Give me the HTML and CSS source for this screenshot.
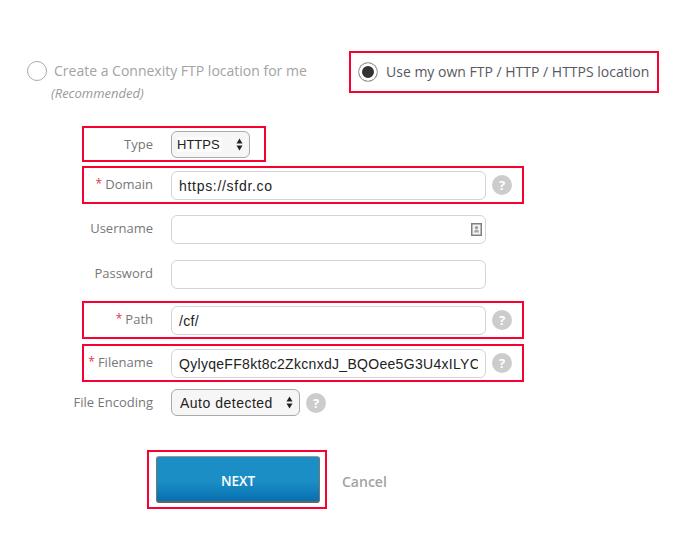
FILE: index.html
```html
<!DOCTYPE html>
<html lang="en">
<head>
    <meta charset="UTF-8">
    <meta name="viewport" content="width=device-width, initial-scale=1.0">
    <title>FTP Location</title>
    <link rel="stylesheet" href="styles.css">
</head>
<body>
    <div class="location-choice">
        <div class="choice choice-off">
            <span class="radio"></span>
            <div>
                <div class="choice-label">Create a Connexity FTP location for me</div>
                <div class="choice-note">(Recommended)</div>
            </div>
        </div>
        <div class="choice choice-on marked">
            <span class="radio radio-on"></span>
            <div class="choice-label">Use my own FTP / HTTP / HTTPS location</div>
        </div>
    </div>

    <div class="form">
        <div class="row row-type marked">
            <label class="label">Type</label>
            <div class="select select-type"><span class="select-value">HTTPS</span><svg class="arrows" width="7" height="13" viewBox="0 0 7 13"><path d="M3.5 0.5L6.5 5.5H0.5Z M3.5 12.5L0.5 7.5H6.5Z"/></svg></div>
        </div>
        <div class="row marked">
            <label class="label"><span class="req">*</span>Domain</label>
            <div class="input input-wide">https://sfdr.co</div>
            <span class="help">?</span>
        </div>
        <div class="row row-plain">
            <label class="label">Username</label>
            <div class="input input-icon">
                <svg width="11" height="13" viewBox="0 0 11 13"><rect x="0.75" y="0.75" width="9.5" height="11.5" fill="#f4f4f4" stroke="#808080" stroke-width="1.5"/><circle cx="5.5" cy="4.6" r="1.6" fill="#999"/><path d="M3 9.5c0-2 1-3 2.5-3s2.5 1 2.5 3z" fill="#aaa"/></svg>
            </div>
        </div>
        <div class="row row-plain">
            <label class="label">Password</label>
            <div class="input"></div>
        </div>
        <div class="row row-path marked">
            <label class="label"><span class="req">*</span>Path</label>
            <div class="input">/cf/</div>
            <span class="help">?</span>
        </div>
        <div class="row row-filename marked">
            <label class="label"><span class="req">*</span>Filename</label>
            <div class="input"><span class="input-clip">QylyqeFF8kt8c2ZkcnxdJ_BQOee5G3U4xILYC</span></div>
            <span class="help">?</span>
        </div>
        <div class="row row-encoding">
            <label class="label">File Encoding</label>
            <div class="select select-encoding"><span>Auto detected</span><svg class="arrows" width="7" height="13" viewBox="0 0 7 13"><path d="M3.5 0.5L6.5 5.5H0.5Z M3.5 12.5L0.5 7.5H6.5Z"/></svg></div>
            <span class="help">?</span>
        </div>
    </div>

    <div class="actions">
        <div class="next-box marked"><button class="next-button">NEXT</button></div>
        <a class="cancel">Cancel</a>
    </div>
</body>
</html>
```

FILE: styles.css
```css
body {
    font-family: "Open Sans", sans-serif;
    margin: 0;
    padding: 0;
    background-color: #fff;
    color: #666;
}
.marked { border: 2px solid #fa0030; box-sizing: border-box; }

/* radio choices */
.location-choice {
    display: flex;
    padding: 51px 0 0 27px;
    align-items: flex-start;
}
.choice { display: flex; font-size: 14px; }
.choice-off { width: 322px; padding-top: 10px; color: #a3a3a3; }
.choice-on { width: 310px; height: 42px; padding: 9px 0 0 7px; color: #58585f; }
.radio {
    width: 20px;
    height: 20px;
    flex: none;
    box-sizing: border-box;
    border: 1.5px solid #aaa;
    border-radius: 50%;
    margin-right: 7px;
    background-color: #fff;
}
.radio-on {
    box-shadow: inset 0 0 0 3px #fff;
    background-color: #333;
    border-color: #b5b5b5;
    margin-right: 8px;
}
.choice-label { line-height: 20px; white-space: nowrap; }
.choice-note { font-size: 13px; font-style: italic; color: #999; margin: 4px 0 0 -3px; line-height: 16px; }

/* form rows */
.form {
    display: flex;
    flex-direction: column;
    gap: 6px;
    margin: 25px 0 0 82px;
    width: 442px;
}
.row {
    display: flex;
    align-items: center;
    height: 38px;
    box-sizing: border-box;
    border: 2px solid transparent;
}
.row.marked { border-color: #fa0030; }
.row-type { width: 184px; height: 36px; margin-bottom: -2px; }
.row-plain { margin-bottom: 1px; }
.row-path { margin-top: 1px; margin-bottom: -1px; }
.row-filename { margin-bottom: 1px; }
.row-encoding { height: 27px; width: 300px; }
.label {
    width: 69px;
    margin: 0 18px 2px 0;
    flex: none;
    display: flex;
    justify-content: flex-end;
    white-space: nowrap;
    font-size: 13px;
    color: #777;
}
.row-type .label { margin-bottom: 0; }
.req { color: #e2364b; margin-right: 3px; font-size: 12px; }
.input {
    width: 315px;
    height: 29px;
    flex: none;
    box-sizing: border-box;
    border: 1px solid #d4d4d4;
    border-radius: 6px;
    padding: 0 7px;
    font-family: "Liberation Sans", Arial, sans-serif;
    font-size: 14px;
    line-height: 28px;
    letter-spacing: 0.3px;
    color: #222;
    background-color: #fff;
}
.input-wide { letter-spacing: 0.7px; }
.input-clip { display: block; overflow: hidden; white-space: nowrap; }
.input-icon { display: flex; align-items: center; justify-content: flex-end; padding-right: 3px; }
.select {
    display: flex;
    align-items: center;
    justify-content: space-between;
    height: 27px;
    flex: none;
    box-sizing: border-box;
    border: 1px solid #aaa;
    border-radius: 6px;
    padding: 0 6px 0 5px;
    font-family: "Liberation Sans", Arial, sans-serif;
    font-size: 14px;
    letter-spacing: 0.5px;
    color: #222;
    background-color: #f6f6f6;
}
.select-type { width: 79px; }
.select-value { font-size: 13px; letter-spacing: 0; background-color: #fcfcfc; padding-right: 2px; }
.select-encoding { width: 129px; padding-left: 8px; }
.arrows { fill: #222; }
.help {
    width: 20px;
    height: 20px;
    flex: none;
    margin-left: 6px;
    border-radius: 50%;
    background-color: #ccc;
    color: #fff;
    font-size: 13px;
    font-weight: 700;
    line-height: 20px;
    text-align: center;
}

/* buttons */
.actions {
    display: flex;
    align-items: center;
    margin: 34px 0 0 147px;
}
.next-box {
    width: 180px;
    height: 59px;
    padding: 4px 0 0 7px;
}
.next-button {
    display: block;
    width: 164px;
    height: 47px;
    padding-top: 4px;
    border: 1px solid #777;
    border-top-color: #999;
    border-bottom: 2px solid #666;
    border-radius: 3px;
    background: linear-gradient(#1b8ec5 0%, #1b8ec5 55%, #0670b0 100%);
    color: #fff;
    font-family: "Open Sans", sans-serif;
    font-size: 13.5px;
    font-weight: 600;
}
.cancel { margin: 3px 0 0 15px; font-size: 14px; font-weight: 600; color: #a3a3a3; }
```
